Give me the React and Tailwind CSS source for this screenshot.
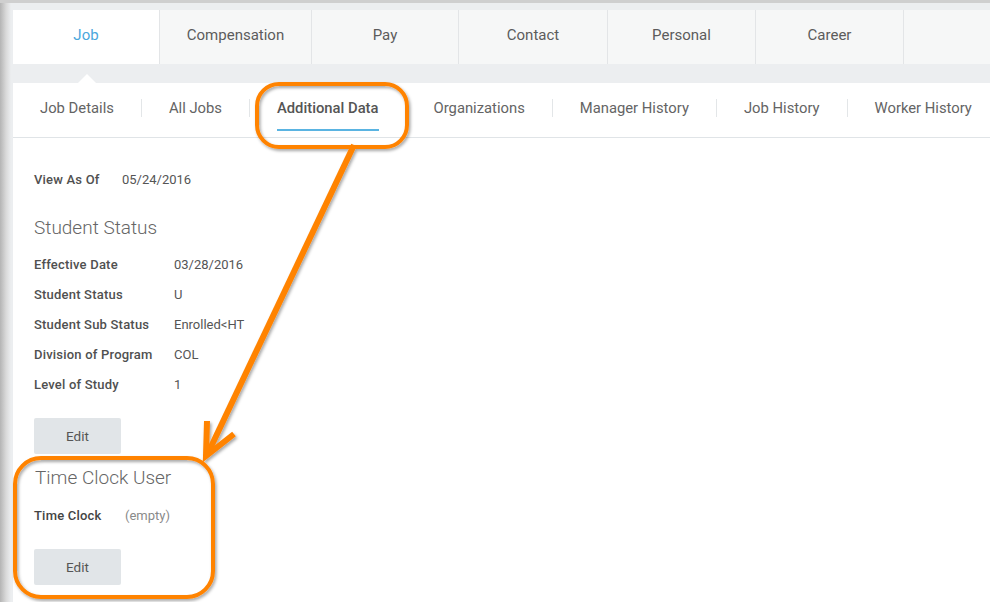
import React from 'react'

const topTabs = [
  ['Job', 'w-[147px]'],
  ['Compensation', 'w-[152px]'],
  ['Pay', 'w-[147px]'],
  ['Contact', 'w-[149px]'],
  ['Personal', 'w-[148px]'],
  ['Career', 'w-[148px]'],
]
const subTabs = ['Job Details', 'All Jobs', 'Additional Data', 'Organizations', 'Manager History', 'Job History', 'Worker History']

const studentRows = [
  ['Effective Date', '03/28/2016'],
  ['Student Status', 'U'],
  ['Student Sub Status', 'Enrolled<HT'],
  ['Division of Program', 'COL'],
  ['Level of Study', '1'],
]

function EditButton() {
  return (
    <button className="w-[87px] h-[36px] rounded-[2px] bg-[#e1e5e8] text-[13.5px] text-[#555]">
      Edit
    </button>
  )
}

// orange callouts drawn on top of the page
function Callouts() {
  return (
    <svg className="absolute inset-0 pointer-events-none" width="990" height="602">
      <defs>
        <filter id="callout-shadow" x="-10%" y="-10%" width="130%" height="130%">
          <feDropShadow dx="1.5" dy="2" stdDeviation="1.5" floodColor="#000" floodOpacity="0.35" />
        </filter>
      </defs>
      <g filter="url(#callout-shadow)" fill="none" stroke="#ff8300" strokeLinecap="round">
        <rect x="257" y="84" width="150" height="63" rx="22" strokeWidth="4" />
        <rect x="15" y="458" width="198" height="139" rx="26" strokeWidth="4" />
        <line x1="354" y1="145" x2="209" y2="451" strokeWidth="6" strokeLinecap="butt" />
        <polyline points="207,421 206,456 234,434" strokeWidth="6" strokeLinejoin="miter" strokeLinecap="butt" />
      </g>
    </svg>
  )
}

export default function App() {
  return (
    <div className="relative w-[990px] h-[602px] overflow-hidden font-['Roboto',sans-serif] bg-[linear-gradient(to_right,#b4b4b4,#d9d9d9_6px,#eceef0_11px)]">
      <div className="h-[3px] bg-[#cfcfcf]" />
      <div className="ml-[13px] mt-[7px] flex flex-col">
        {/* top tabs */}
        <div className="flex h-[54px] bg-[#f6f7f7]">
          {topTabs.map(([t, w], i) => (
            <div
              key={t}
              className={
                w + ' shrink-0 pb-[4px] flex items-center justify-center border-r border-[#e3e5e7] text-[15px] ' +
                (i === 0 ? 'bg-white text-[#4aa7dc]' : 'text-[#5c5c5c]')
              }
            >
              {t}
            </div>
          ))}
          <div className="flex-1" />
        </div>

        {/* strip with pointer under the active tab */}
        <div className="h-[19px] flex items-end bg-[#eceef0]">
          <div className="w-[147px] flex justify-center">
            <div className="w-0 h-0 border-x-[9px] border-x-transparent border-b-[9px] border-b-white" />
          </div>
        </div>

        {/* sub tabs */}
        <div className="h-[55px] pb-[4px] bg-white border-b border-[#e0e4e7] flex items-center whitespace-nowrap">
          {subTabs.map((t, i) => (
            <React.Fragment key={t}>
              {i > 0 && <div className="shrink-0 w-px h-[18px] bg-[#e3e6e8]" />}
              <div className="relative shrink-0 self-stretch px-[27px] flex items-center">
                <span
                  className={
                    'text-[14.8px] ' +
                    (t === 'Additional Data' ? 'font-medium text-[#555]' : 'text-[#646464]')
                  }
                >
                  {t}
                </span>
                {t === 'Additional Data' && (
                  <div className="absolute left-[27px] right-[27px] bottom-[2px] h-[2px] bg-[#5ab4e2]" />
                )}
              </div>
            </React.Fragment>
          ))}
        </div>

        {/* content */}
        <div className="h-[500px] bg-white pl-[21px] pt-[32px]">
          <div className="flex items-center h-[20px]">
            <span className="w-[88px] text-[13px] tracking-[0.2px] font-medium text-[#505050]">View As Of</span>
            <span className="text-[13px] text-[#555]">05/24/2016</span>
          </div>

          <h2 className="mt-[26px] h-[24px] leading-[24px] text-[19px] font-light text-[#666]">Student Status</h2>

          <div className="mt-[10px] flex flex-col">
            {studentRows.map(([label, value]) => (
              <div key={label} className="flex items-center h-[30px]">
                <span className="w-[140px] text-[13px] tracking-[0.2px] font-medium text-[#505050]">{label}</span>
                <span className="text-[13px] text-[#555]">{value}</span>
              </div>
            ))}
          </div>

          <div className="mt-[18px]">
            <EditButton />
          </div>

          <h2 className="mt-[12px] ml-px h-[24px] leading-[24px] text-[19px] font-light text-[#666]">Time Clock User</h2>

          <div className="mt-[11px] flex items-center h-[30px]">
            <span className="w-[91px] text-[13px] tracking-[0.2px] font-medium text-[#444]">Time Clock</span>
            <span className="text-[13px] text-[#8a8a8a]">(empty)</span>
          </div>

          <div className="mt-[18px]">
            <EditButton />
          </div>
        </div>
      </div>
      <Callouts />
    </div>
  )
}
